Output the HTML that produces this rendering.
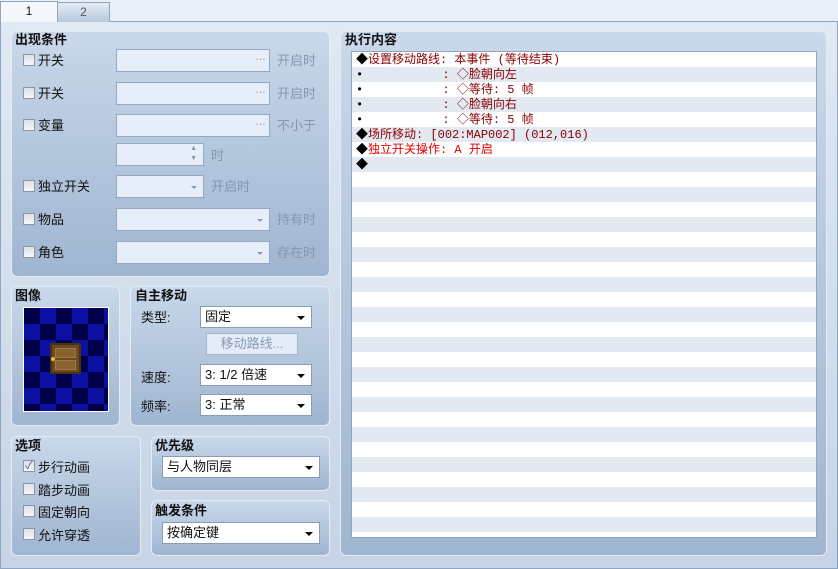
<!DOCTYPE html><html><head><meta charset="utf-8"><style>
*{box-sizing:border-box;margin:0;padding:0}
body{width:838px;height:569px;overflow:hidden;background:#e8eff8;font-family:"Liberation Sans","Noto Sans CJK SC",sans-serif;font-size:13px;color:#111;position:relative}
.a{position:absolute}
.main{left:0;top:21px;width:838px;height:548px;background:linear-gradient(#e0e9f4,#c6d4e5);border:1px solid #8fa5bf}
.tab{top:2px;height:20px;text-align:center;font-size:12px;line-height:18px;border:1px solid #8fa5bf;border-bottom:none}
.p{border-radius:6px;background:linear-gradient(#c9d8ea,#9fb5d0);border:1px solid #e4ecf5}
.t{font-weight:bold;font-size:13px;line-height:14px}
.cb{width:12px;height:12px;border:1px solid #8c96a0;background:linear-gradient(#dde2e8,#f5f7f9)}
.in{background:#e6eefa;border:1px solid #95a8bf;height:23px}
.g{color:#8496b0}
.sel{background:#fff;border:1px solid #8b9cb0;height:22px;padding-left:4px;line-height:20px}
.arr{position:absolute;right:6px;top:9px;border:4px solid transparent;border-top:4px solid #000;border-bottom:none}
.ga{position:absolute;right:6px;top:10px;border:3.5px solid transparent;border-top:3.5px solid #8a99ab;border-bottom:none}
.row{height:15px;line-height:15px;font-family:"Liberation Mono","Noto Sans CJK SC",monospace;font-size:12px;color:#8b0000;padding-left:4px;white-space:pre}
</style></head><body>
<div class="a main"></div>
<div class="a tab" style="left:0;width:58px;background:#f4f8fd;height:21px;top:1px">1</div>
<div class="a tab" style="left:57px;width:53px;background:linear-gradient(#e4ecf4,#b5c8dc);color:#556">2</div>

<div class="a p" style="left:11px;top:31px;width:319px;height:246px"></div>
<div class="a t" style="left:15px;top:33px">出现条件</div>
<div class="a cb" style="left:23px;top:54px"></div><div class="a" style="left:38px;top:50px">开关</div>
<div class="a in" style="left:116px;top:49px;width:154px"><span class="a g" style="right:3px;top:1px;font-size:11px">…</span></div><div class="a g" style="left:277px;top:50px">开启时</div>
<div class="a cb" style="left:23px;top:87px"></div><div class="a" style="left:38px;top:83px">开关</div>
<div class="a in" style="left:116px;top:82px;width:154px"><span class="a g" style="right:3px;top:1px;font-size:11px">…</span></div><div class="a g" style="left:277px;top:83px">开启时</div>
<div class="a cb" style="left:23px;top:119px"></div><div class="a" style="left:38px;top:115px">变量</div>
<div class="a in" style="left:116px;top:114px;width:154px"><span class="a g" style="right:3px;top:1px;font-size:11px">…</span></div><div class="a g" style="left:277px;top:115px">不小于</div>
<div class="a in" style="left:116px;top:143px;width:88px"><span class="a g" style="right:6px;top:0;font-size:7px;line-height:10px">▲<br>▼</span></div><div class="a g" style="left:211px;top:145px">时</div>
<div class="a cb" style="left:23px;top:180px"></div><div class="a" style="left:38px;top:176px">独立开关</div>
<div class="a in" style="left:116px;top:175px;width:88px"><i class="ga"></i></div><div class="a g" style="left:211px;top:176px">开启时</div>
<div class="a cb" style="left:23px;top:213px"></div><div class="a" style="left:38px;top:209px">物品</div>
<div class="a in" style="left:116px;top:208px;width:154px"><i class="ga"></i></div><div class="a g" style="left:277px;top:209px">持有时</div>
<div class="a cb" style="left:23px;top:246px"></div><div class="a" style="left:38px;top:242px">角色</div>
<div class="a in" style="left:116px;top:241px;width:154px"><i class="ga"></i></div><div class="a g" style="left:277px;top:242px">存在时</div>

<div class="a p" style="left:11px;top:286px;width:109px;height:140px"></div>
<div class="a t" style="left:15px;top:289px">图像</div>
<div class="a" style="left:23px;top:307px;width:86px;height:105px;border:1px solid #fff;background-color:#00004a;background-image:linear-gradient(45deg,#0a10a0 25%,transparent 25%,transparent 75%,#0a10a0 75%),linear-gradient(45deg,#0a10a0 25%,transparent 25%,transparent 75%,#0a10a0 75%);background-size:32px 32px;background-position:0 0,16px 16px"></div>
<div class="a" style="left:50px;top:343px;width:31px;height:31px;background:#6b4a22;border:2px solid #4a3010"><div class="a" style="left:3px;top:3px;width:21px;height:10px;border:1px solid #a07a40;background:#8a6230"></div><div class="a" style="left:3px;top:15px;width:21px;height:10px;border:1px solid #a07a40;background:#8a6230"></div><div class="a" style="left:-1px;top:12px;width:4px;height:4px;background:#e0c040;border-radius:2px"></div></div>

<div class="a p" style="left:130px;top:286px;width:200px;height:140px"></div>
<div class="a t" style="left:135px;top:289px">自主移动</div>
<div class="a" style="left:141px;top:307px">类型:</div>
<div class="a sel" style="left:200px;top:306px;width:112px">固定<i class="arr"></i></div>
<div class="a" style="left:206px;top:333px;width:92px;height:22px;background:#e3ecf8;border:1px solid #a8b8cc;color:#8a9cb4;text-align:center;line-height:20px">移动路线...</div>
<div class="a" style="left:141px;top:367px">速度:</div>
<div class="a sel" style="left:200px;top:364px;width:112px">3: 1/2 倍速<i class="arr"></i></div>
<div class="a" style="left:141px;top:396px">频率:</div>
<div class="a sel" style="left:200px;top:394px;width:112px">3: 正常<i class="arr"></i></div>

<div class="a p" style="left:11px;top:436px;width:130px;height:120px"></div>
<div class="a t" style="left:15px;top:439px">选项</div>
<div class="a cb" style="left:23px;top:460px;font-size:11px;line-height:10px;color:#5060a0;text-align:center">✓</div><div class="a" style="left:38px;top:457px">步行动画</div>
<div class="a cb" style="left:23px;top:483px"></div><div class="a" style="left:38px;top:480px">踏步动画</div>
<div class="a cb" style="left:23px;top:505px"></div><div class="a" style="left:38px;top:502px">固定朝向</div>
<div class="a cb" style="left:23px;top:528px"></div><div class="a" style="left:38px;top:525px">允许穿透</div>

<div class="a p" style="left:151px;top:436px;width:179px;height:55px"></div>
<div class="a t" style="left:155px;top:439px">优先级</div>
<div class="a sel" style="left:162px;top:456px;width:158px">与人物同层<i class="arr"></i></div>
<div class="a p" style="left:151px;top:500px;width:179px;height:56px"></div>
<div class="a t" style="left:155px;top:504px">触发条件</div>
<div class="a sel" style="left:162px;top:522px;width:158px">按确定键<i class="arr"></i></div>

<div class="a p" style="left:340px;top:31px;width:487px;height:525px"></div>
<div class="a t" style="left:345px;top:33px">执行内容</div>
<div class="a" style="left:351px;top:51px;width:466px;height:487px;background:repeating-linear-gradient(#fff 0 15px,#e3e9f1 15px 30px);border:1px solid #8fa5bf;padding-top:1px">
<div class="row"><span style="color:#000">◆</span>设置移动路线: 本事件 (等待结束)</div>
<div class="row"><span style="color:#000">•</span>           : ◇脸朝向左</div>
<div class="row"><span style="color:#000">•</span>           : ◇等待: 5 帧</div>
<div class="row"><span style="color:#000">•</span>           : ◇脸朝向右</div>
<div class="row"><span style="color:#000">•</span>           : ◇等待: 5 帧</div>
<div class="row"><span style="color:#000">◆</span>场所移动: [002:MAP002] (012,016)</div>
<div class="row" style="color:#e00000"><span style="color:#000">◆</span>独立开关操作: A 开启</div>
<div class="row"><span style="color:#000">◆</span></div>
</div>
</body></html>
